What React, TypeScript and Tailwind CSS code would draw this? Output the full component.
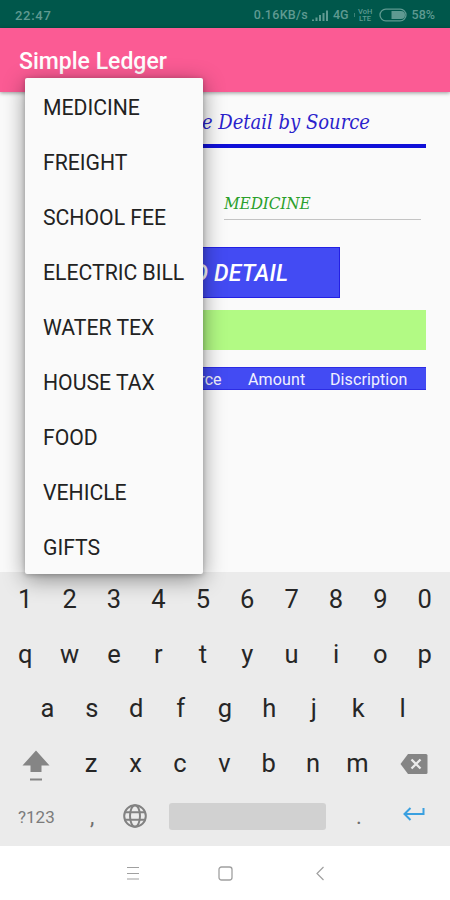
import React from 'react';

const SOURCES = ['MEDICINE', 'FREIGHT', 'SCHOOL FEE', 'ELECTRIC BILL', 'WATER TEX', 'HOUSE TAX', 'FOOD', 'VEHICLE', 'GIFTS'];

const StatusBar: React.FC = () => (
  <div className="h-[27.5px] bg-[#00574b] flex items-center px-[15px] pt-[3px] text-[#5f9a91] text-[12.5px] leading-none font-medium">
    <span className="text-[13px] tracking-[0.7px]">22:47</span>
    <span className="ml-auto tracking-[0.3px]">0.16KB/s</span>
    <svg className="ml-[3px]" width="18" height="13" viewBox="0 0 18 13" fill="currentColor">
      <rect x="1" y="10.5" width="2" height="1.5" />
      <rect x="4.5" y="8.5" width="2" height="3.5" />
      <rect x="8" y="6" width="2" height="6" />
      <rect x="11.5" y="4" width="2" height="8" />
      <rect x="15" y="1.5" width="2" height="10.5" />
    </svg>
    <span className="ml-[4px]">4G</span>
    <span className="ml-[5px] h-[4px] w-px bg-[#3b8076]" />
    <span className="ml-[3px] flex w-[15px] flex-col items-center text-[7.5px] leading-[7px] font-medium">
      <span>VoH</span>
      <span>LTE</span>
    </span>
    <svg className="ml-[6px]" width="29" height="14" viewBox="0 0 29 14" fill="none">
      <rect x="1" y="1.2" width="26" height="11.6" rx="5.8" stroke="currentColor" strokeWidth="1.3" />
      <path d="M12.5 3h9.500a4 4 0 0 1 0 8H12.5z" fill="currentColor" />
    </svg>
    <span className="ml-[4px]">58%</span>
  </div>
);

const SourcePopup: React.FC = () => (
  <ul className="absolute left-[25px] top-[78px] w-[177.5px] h-[495.5px] rounded-[2px] bg-[#fafafa] pt-px shadow-[0_5px_22px_rgba(0,0,0,0.42),0_1px_5px_rgba(0,0,0,0.22)]">
    {SOURCES.map((s) => (
      <li key={s} className="h-[55px] pl-[18px] pt-[2px] flex items-center text-[21.2px] leading-none text-[#222] whitespace-nowrap">
        {s}
      </li>
    ))}
  </ul>
);

const KeyRow: React.FC<{ keys: string }> = ({ keys }) => (
  <>
    {keys.split('').map((k) => (
      <span key={k} className="w-[44.4px] text-center">{k}</span>
    ))}
  </>
);

const Keyboard: React.FC = () => (
  <div className="h-[274px] bg-[#ebebeb] text-[#262626] text-[25.5px] leading-none">
    <div className="h-[54px] pt-[2px] flex items-center justify-center"><KeyRow keys="1234567890" /></div>
    <div className="h-[55px] pt-[2px] flex items-center justify-center"><KeyRow keys="qwertyuiop" /></div>
    <div className="h-[55px] flex items-center justify-center"><KeyRow keys="asdfghjkl" /></div>
    <div className="h-[55px] flex items-center">
      <span className="w-[69px] flex justify-center pl-[3px]">
        <svg width="28" height="34" viewBox="0 0 28 34" fill="#858585">
          <path d="M14 3.500 27.500 18.500H19.5v6.500H8.500v-6.500H.5z" />
          <rect x="8" y="31.500" width="12" height="2" />
        </svg>
      </span>
      <KeyRow keys="zxcvbnm" />
      <svg className="ml-[20px]" width="28" height="22" viewBox="0 0 28 22">
        <path d="M8 1h18q1.500 0 1.500 1.500v17q0 1.500-1.500 1.500H8L.5 11z" fill="#858585" />
        <path d="M11.500 6.500l9 9M20.500 6.500l-9 9" stroke="#ebebeb" strokeWidth="2.300" />
      </svg>
    </div>
    <div className="h-[50px] flex items-center">
      <span className="ml-[18px] w-[37px] pt-[2px] text-[17px] text-[#7b7b7b]">?123</span>
      <span className="ml-[35px] w-[6px] pt-[2px] text-[22px] text-[#6e6e6e]">,</span>
      <svg className="ml-[26px]" width="26" height="26" viewBox="0 0 26 26" fill="none" stroke="#828282" strokeWidth="2">
        <circle cx="13" cy="13" r="10.800" />
        <ellipse cx="13" cy="13" rx="5" ry="10.800" />
        <path d="M3 9.300h20M3 16.700h20" />
      </svg>
      <span className="ml-[21px] w-[157px] h-[27px] rounded-[3px] bg-[#d1d1d1]" />
      <span className="ml-[30px] w-[7px] pt-px text-[22px] text-[#6e6e6e]">.</span>
      <svg className="ml-[39px] mb-[5px]" width="24" height="16" viewBox="0 0 24 16" fill="none" stroke="#3aa0e0" strokeWidth="2">
        <path d="M21.500 2v6H3M8.500 2l-6 6 6 6" />
      </svg>
    </div>
  </div>
);

const NavBar: React.FC = () => (
  <div className="h-[54px] bg-white flex items-center">
    <svg className="ml-[126px]" width="14" height="14" viewBox="0 0 14 14" stroke="#a0a0a0" strokeWidth="1.200">
      <path d="M1 1.500h12M1 7.500h12M1 13h12" />
    </svg>
    <svg className="ml-[78px]" width="15" height="15" viewBox="0 0 15 15" fill="none" stroke="#a0a0a0" strokeWidth="1.300">
      <rect x="1" y="1" width="13" height="13" rx="2.500" />
    </svg>
    <svg className="ml-[82px]" width="10" height="15" viewBox="0 0 10 15" fill="none" stroke="#a0a0a0" strokeWidth="1.200">
      <path d="M8.500 1 2 7.500l6.500 6.500" />
    </svg>
  </div>
);

export default function App() {
  return (
    <div className="relative w-[450px] h-[900px] overflow-hidden bg-[#fafafa] font-[Roboto,sans-serif]">
      <StatusBar />
      <header className="relative h-[64.5px] bg-[#fb5b94] flex items-center pl-[19px] pt-[4px] shadow-[0_1px_4px_rgba(0,0,0,0.4)]">
        <h1 className="text-[23px] leading-none font-medium text-white">Simple Ledger</h1>
      </header>

      <main className="h-[480px] pl-[26px] pr-[24px]">
        <div className="h-[56px] border-b-4 border-[#1010d8] flex justify-end items-center pr-[56px] pt-[7px] font-['DejaVu_Serif_Condensed','DejaVu_Serif',serif] italic text-[20px] leading-none text-[#2a22cc] whitespace-nowrap">
          Expense Detail by Source
        </div>
        <div className="ml-[198px] mt-[36px] w-[197px] h-[36px] border-b border-[#c4c4c4] flex items-center pt-[3px] font-['DejaVu_Serif_Condensed','DejaVu_Serif',serif] italic text-[17px] tracking-[-0.1px] leading-none text-[#2ba02b]">
          MEDICINE
        </div>
        <div className="ml-[84px] mt-[27px] w-[230px] h-[51px] border border-[#2320e4] bg-[#434bf3] flex items-center justify-center pl-[2px] pt-[4px] text-[23px] font-medium italic text-white tracking-[0.2px]">
          ADD DETAIL
        </div>
        <div className="mt-[12px] h-[40px] bg-[#b2fa84]" />
        <div className="mt-[17px] h-[22.5px] border-y border-[#2c2ce4] bg-[#434bf3] flex items-center pt-[3px] text-[16px] leading-none text-[#f1f1ff]">
          <span className="w-[122px] pl-[40px]">Date</span>
          <span className="w-[100px] pl-[24px]">Source</span>
          <span className="w-[82px] tracking-[0.15px]">Amount</span>
          <span className="tracking-[0.1px]">Discription</span>
        </div>
      </main>

      <Keyboard />
      <NavBar />
      <SourcePopup />
    </div>
  );
}
